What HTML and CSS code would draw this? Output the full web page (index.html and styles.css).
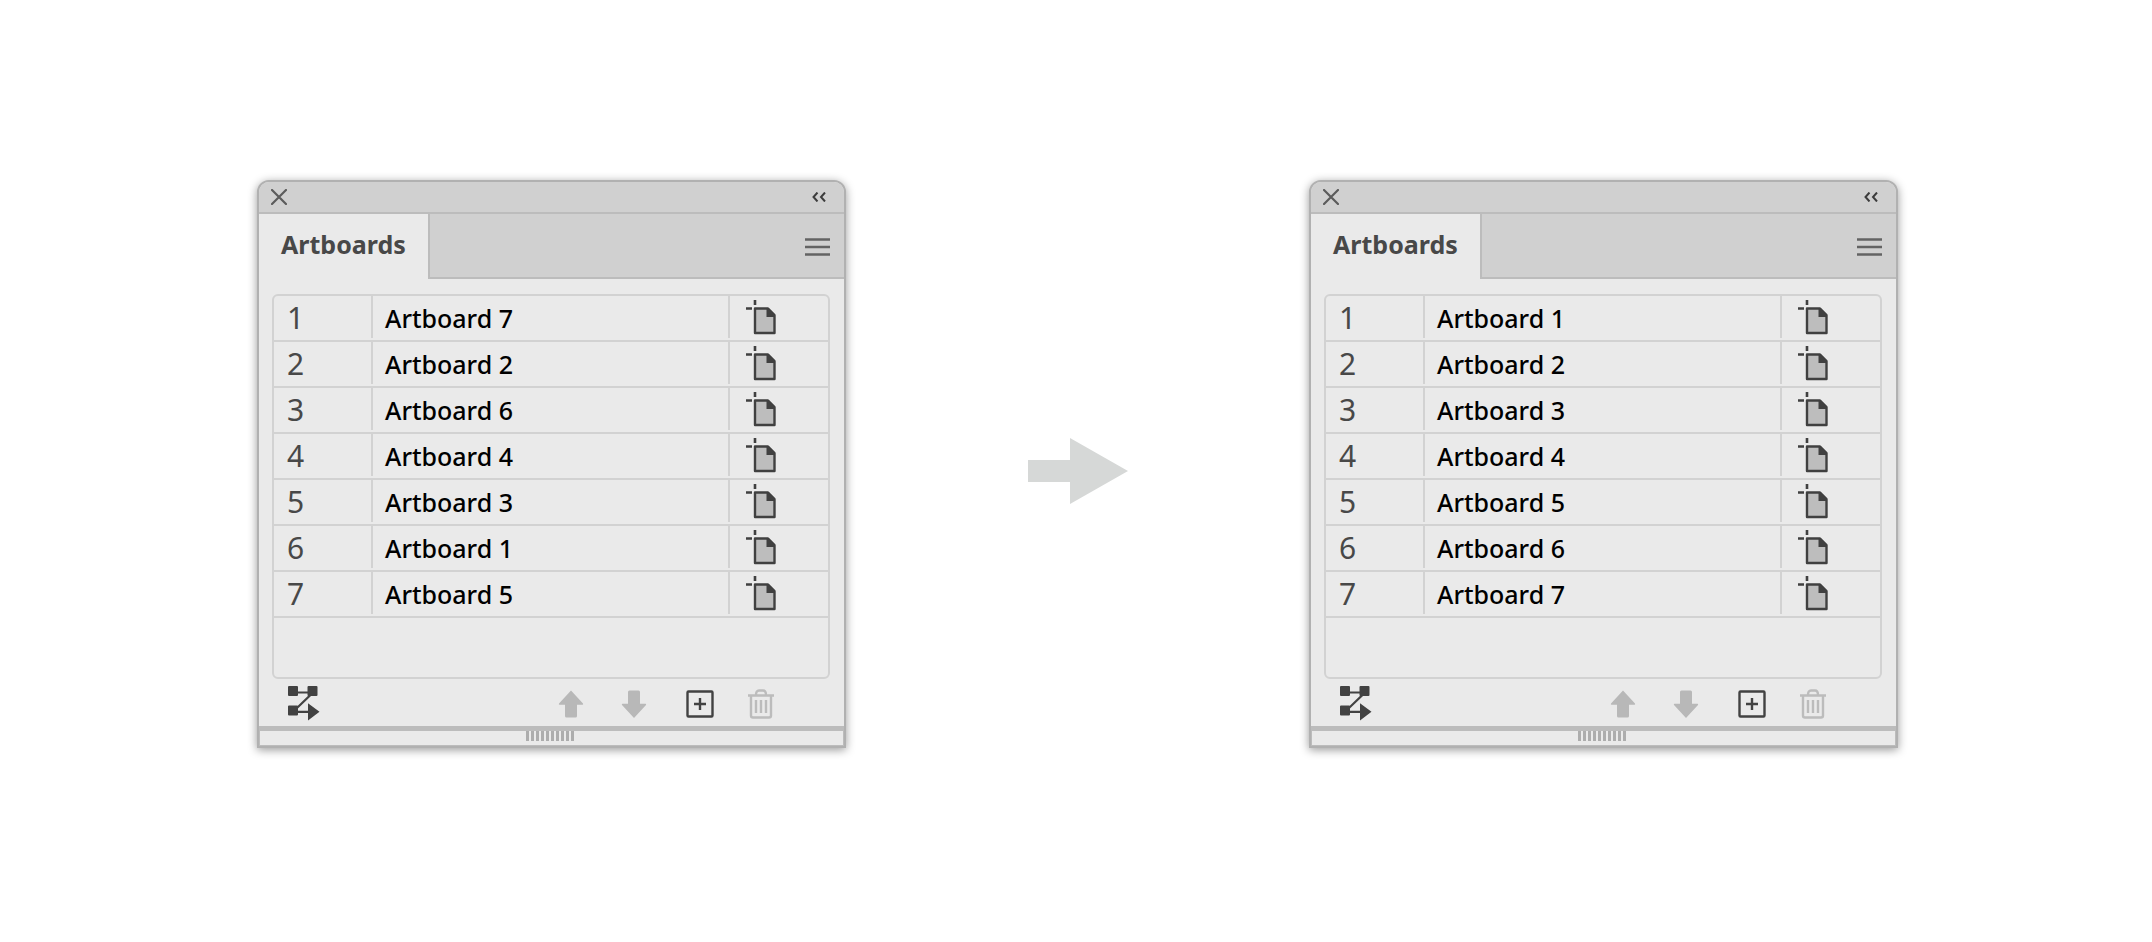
FILE: index.html
```
<!DOCTYPE html>
<html lang="en">
<head>
<meta charset="utf-8">
<title>Artboards</title>
<link rel="stylesheet" href="styles.css">
</head>
<body>
<svg class="sprite" aria-hidden="true">
  <symbol id="i-close" viewBox="0 0 16 16"><path d="M1 1l14 14M15 1L1 15" fill="none" stroke="#5c5c5c" stroke-width="2.200" stroke-linecap="round"/></symbol>
  <symbol id="i-collapse" viewBox="0 0 14 10"><path d="M5.500 .5L1.500 5l4 4.500M13 .5L9 5l4 4.500" fill="none" stroke="#3c3c3c" stroke-width="2"/></symbol>
  <symbol id="i-menu" viewBox="0 0 25 18"><path d="M0 1.500h25M0 9h25M0 16.500h25" stroke="#636363" stroke-width="2.400"/></symbol>
  <symbol id="i-page" viewBox="0 0 30 35">
    <path d="M9 0v5M0 8.500h6" stroke="#404040" stroke-width="2.600"/>
    <path d="M9 8.500h13l6.500 6.500v18H9z" fill="#bdbdbd" stroke="#404040" stroke-width="2.400" stroke-linejoin="round"/>
    <path d="M20.500 8h2l6.500 7v2h-8.500z" fill="#404040"/>
  </symbol>
  <symbol id="i-order" viewBox="0 0 32 35">
    <path d="M5 6.500h20L5 25.800h18" fill="none" stroke="#424242" stroke-width="2.200"/>
    <path d="M1 0h8a1 1 0 011 1v8a1 1 0 01-1 1H1a1 1 0 01-1-1V1a1 1 0 011-1zM20.500 0h8a1 1 0 011 1v8a1 1 0 01-1 1h-8a1 1 0 01-1-1V1a1 1 0 011-1zM1 19.500h8a1 1 0 011 1v8a1 1 0 01-1 1H1a1 1 0 01-1-1v-8a1 1 0 011-1zM20 17.300l11.500 8.500L20 34.500z" fill="#424242"/>
  </symbol>
  <symbol id="i-up" viewBox="0 0 28 28"><path d="M14 .5L26 13.500q.6 1.200-.6 1.200H20V26q0 1.500-1.500 1.500h-9Q8 27.500 8 26V14.700H2.600q-1.200 0-.6-1.200z" fill="#b8b8b8"/></symbol>
  <symbol id="i-down" viewBox="0 0 28 28"><path d="M14 28L26 15q.6-1.200-.6-1.200H20V2Q20 .5 18.500 .5h-9Q8 .5 8 2v11.800H2.600q-1.200 0-.6 1.200z" fill="#b8b8b8"/></symbol>
  <symbol id="i-new" viewBox="0 0 28 28"><rect x="1.500" y="1.500" width="25" height="25" rx="1" fill="none" stroke="#424242" stroke-width="2.400"/><path d="M14 8v12M8 14h12" stroke="#424242" stroke-width="2.400"/></symbol>
  <symbol id="i-trash" viewBox="0 0 28 30"><path d="M1 6.500h26M9 6q0-4.500 3-4.500h4q3 0 3 4.500M4 7v19.500q0 2 2 2h16q2 0 2-2V7M9 11v13M14 11v13M19 11v13" fill="none" stroke="#bcbcbc" stroke-width="2.400"/></symbol>
</svg>

<main class="stage">
  <section class="panel" aria-label="Artboards panel, before">
    <header class="titlebar">
      <button class="btn" type="button" aria-label="Close"><svg class="close"><use href="#i-close"/></svg></button>
      <button class="btn" type="button" aria-label="Collapse"><svg class="collapse"><use href="#i-collapse"/></svg></button>
    </header>
    <div class="tabs">
      <button class="tab" type="button">Artboards</button>
      <div class="tabrest"><button class="btn" type="button" aria-label="Panel menu"><svg class="menu"><use href="#i-menu"/></svg></button></div>
    </div>
    <div class="body">
      <div class="list">
        <table class="rows">
          <tr><td class="num"><div class="cell">1</div></td><td><div class="cell">Artboard 7</div></td><td class="act"><button class="btn" type="button" aria-label="Options for Artboard 7"><svg class="page"><use href="#i-page"/></svg></button></td></tr>
          <tr><td class="num"><div class="cell">2</div></td><td><div class="cell">Artboard 2</div></td><td class="act"><button class="btn" type="button" aria-label="Options for Artboard 2"><svg class="page"><use href="#i-page"/></svg></button></td></tr>
          <tr><td class="num"><div class="cell">3</div></td><td><div class="cell">Artboard 6</div></td><td class="act"><button class="btn" type="button" aria-label="Options for Artboard 6"><svg class="page"><use href="#i-page"/></svg></button></td></tr>
          <tr><td class="num"><div class="cell">4</div></td><td><div class="cell">Artboard 4</div></td><td class="act"><button class="btn" type="button" aria-label="Options for Artboard 4"><svg class="page"><use href="#i-page"/></svg></button></td></tr>
          <tr><td class="num"><div class="cell">5</div></td><td><div class="cell">Artboard 3</div></td><td class="act"><button class="btn" type="button" aria-label="Options for Artboard 3"><svg class="page"><use href="#i-page"/></svg></button></td></tr>
          <tr><td class="num"><div class="cell">6</div></td><td><div class="cell">Artboard 1</div></td><td class="act"><button class="btn" type="button" aria-label="Options for Artboard 1"><svg class="page"><use href="#i-page"/></svg></button></td></tr>
          <tr><td class="num"><div class="cell">7</div></td><td><div class="cell">Artboard 5</div></td><td class="act"><button class="btn" type="button" aria-label="Options for Artboard 5"><svg class="page"><use href="#i-page"/></svg></button></td></tr>
        </table>
      </div>
      <footer class="tools">
        <button class="btn" type="button" aria-label="Rearrange all"><svg class="order"><use href="#i-order"/></svg></button>
        <div class="toolset">
          <div class="move">
            <button class="btn" type="button" aria-label="Move up"><svg class="tool"><use href="#i-up"/></svg></button>
            <button class="btn" type="button" aria-label="Move down"><svg class="tool"><use href="#i-down"/></svg></button>
          </div>
          <div class="edit">
            <button class="btn" type="button" aria-label="New artboard"><svg class="tool"><use href="#i-new"/></svg></button>
            <button class="btn" type="button" aria-label="Delete artboard"><svg class="trash"><use href="#i-trash"/></svg></button>
          </div>
        </div>
      </footer>
    </div>
    <div class="resize"><span class="grip"></span></div>
  </section>

  <svg class="arrow" viewBox="0 0 100 66" aria-hidden="true"><path d="M0 22h42V0l58 33-58 33V44H0z" fill="#d6d8d7"/></svg>

  <section class="panel" aria-label="Artboards panel, after">
    <header class="titlebar">
      <button class="btn" type="button" aria-label="Close"><svg class="close"><use href="#i-close"/></svg></button>
      <button class="btn" type="button" aria-label="Collapse"><svg class="collapse"><use href="#i-collapse"/></svg></button>
    </header>
    <div class="tabs">
      <button class="tab" type="button">Artboards</button>
      <div class="tabrest"><button class="btn" type="button" aria-label="Panel menu"><svg class="menu"><use href="#i-menu"/></svg></button></div>
    </div>
    <div class="body">
      <div class="list">
        <table class="rows">
          <tr><td class="num"><div class="cell">1</div></td><td><div class="cell">Artboard 1</div></td><td class="act"><button class="btn" type="button" aria-label="Options for Artboard 1"><svg class="page"><use href="#i-page"/></svg></button></td></tr>
          <tr><td class="num"><div class="cell">2</div></td><td><div class="cell">Artboard 2</div></td><td class="act"><button class="btn" type="button" aria-label="Options for Artboard 2"><svg class="page"><use href="#i-page"/></svg></button></td></tr>
          <tr><td class="num"><div class="cell">3</div></td><td><div class="cell">Artboard 3</div></td><td class="act"><button class="btn" type="button" aria-label="Options for Artboard 3"><svg class="page"><use href="#i-page"/></svg></button></td></tr>
          <tr><td class="num"><div class="cell">4</div></td><td><div class="cell">Artboard 4</div></td><td class="act"><button class="btn" type="button" aria-label="Options for Artboard 4"><svg class="page"><use href="#i-page"/></svg></button></td></tr>
          <tr><td class="num"><div class="cell">5</div></td><td><div class="cell">Artboard 5</div></td><td class="act"><button class="btn" type="button" aria-label="Options for Artboard 5"><svg class="page"><use href="#i-page"/></svg></button></td></tr>
          <tr><td class="num"><div class="cell">6</div></td><td><div class="cell">Artboard 6</div></td><td class="act"><button class="btn" type="button" aria-label="Options for Artboard 6"><svg class="page"><use href="#i-page"/></svg></button></td></tr>
          <tr><td class="num"><div class="cell">7</div></td><td><div class="cell">Artboard 7</div></td><td class="act"><button class="btn" type="button" aria-label="Options for Artboard 7"><svg class="page"><use href="#i-page"/></svg></button></td></tr>
        </table>
      </div>
      <footer class="tools">
        <button class="btn" type="button" aria-label="Rearrange all"><svg class="order"><use href="#i-order"/></svg></button>
        <div class="toolset">
          <div class="move">
            <button class="btn" type="button" aria-label="Move up"><svg class="tool"><use href="#i-up"/></svg></button>
            <button class="btn" type="button" aria-label="Move down"><svg class="tool"><use href="#i-down"/></svg></button>
          </div>
          <div class="edit">
            <button class="btn" type="button" aria-label="New artboard"><svg class="tool"><use href="#i-new"/></svg></button>
            <button class="btn" type="button" aria-label="Delete artboard"><svg class="trash"><use href="#i-trash"/></svg></button>
          </div>
        </div>
      </footer>
    </div>
    <div class="resize"><span class="grip"></span></div>
  </section>
</main>
</body>
</html>
```

FILE: styles.css
```
* { box-sizing: border-box; }

body {
  margin: 0;
  background: #fff;
  font-family: "Noto Sans", "Open Sans", sans-serif;
  color: #000;
}

.sprite { display: none; }

.btn {
  display: block;
  padding: 0;
  border: 0;
  background: none;
}

.btn svg { display: block; }

.stage {
  min-height: 100vh;
  display: grid;
  grid-template-columns: 589fr 463fr 589fr;
  align-items: center;
  padding: 0 254px 14px 257px;
}

.arrow {
  width: 100px;
  height: 66px;
  margin-top: 14px;
  justify-self: center;
}

.panel {
  border: 2px solid #b1b1b1;
  border-radius: 12px 12px 0 0;
  background: #eaeaea;
  box-shadow: 0 2px 10px rgba(0, 0, 0, .4);
}

.titlebar {
  display: flex;
  justify-content: space-between;
  align-items: center;
  height: 32px;
  padding: 0 18px 0 12px;
  background: #d0d0d0;
  border-bottom: 2px solid #bcbcbc;
  border-radius: 10px 10px 0 0;
}

.close { width: 16px; height: 16px; }
.collapse { width: 14px; height: 10px; }
.menu { width: 25px; height: 18px; }

.tabs { display: flex; height: 65px; }

.tab {
  padding: 0 22px 6px;
  border: 0;
  border-right: 2px solid #bcbcbc;
  background: #eaeaea;
  font: bold 25px/32px "Noto Sans", "Open Sans", sans-serif;
  color: #484848;
}

.tabrest {
  flex: 1;
  display: flex;
  justify-content: flex-end;
  align-items: center;
  padding: 2px 14px 0 0;
  background: #d0d0d0;
  border-bottom: 2px solid #bcbcbc;
}

.body { padding: 15px 14px 0 13px; }

.list {
  padding-bottom: 59px;
  border: 2px solid #d2d2d2;
  border-radius: 6px;
}

.rows {
  width: 100%;
  border-spacing: 0;
  table-layout: fixed;
}

.rows td {
  height: 46px;
  padding: 0 0 2px;
  border-bottom: 2px solid #d2d2d2;
  vertical-align: top;
}

.rows .num { width: 99px; }
.rows .act { width: 98px; padding: 4px 0 0 16px; }

.cell {
  height: 42px;
  padding-left: 12px;
  border-right: 2px solid #d2d2d2;
  font-size: 25px;
  font-weight: 500;
  line-height: 44px;
}

.num .cell {
  padding-left: 13px;
  font-size: 30px;
  font-weight: 400;
  color: #484848;
}

.page { width: 30px; height: 35px; }

.tools {
  display: flex;
  justify-content: space-between;
  align-items: center;
  height: 47px;
  padding: 2px 55px 0 16px;
}

.toolset { display: flex; gap: 38px; }
.move { display: flex; align-items: center; gap: 35px; }
.edit { display: flex; align-items: center; gap: 33px; }

.order { width: 32px; height: 35px; }
.tool { width: 28px; height: 28px; }
.trash { width: 28px; height: 30px; }

.resize {
  display: flex;
  justify-content: center;
  height: 20px;
  padding-right: 4px;
  border: 1px solid #bcbcbc;
  border-top-width: 5px;
}

.grip {
  width: 48px;
  height: 10px;
  background: repeating-linear-gradient(90deg, #adadad 0 3px, transparent 3px 5px);
}
```
